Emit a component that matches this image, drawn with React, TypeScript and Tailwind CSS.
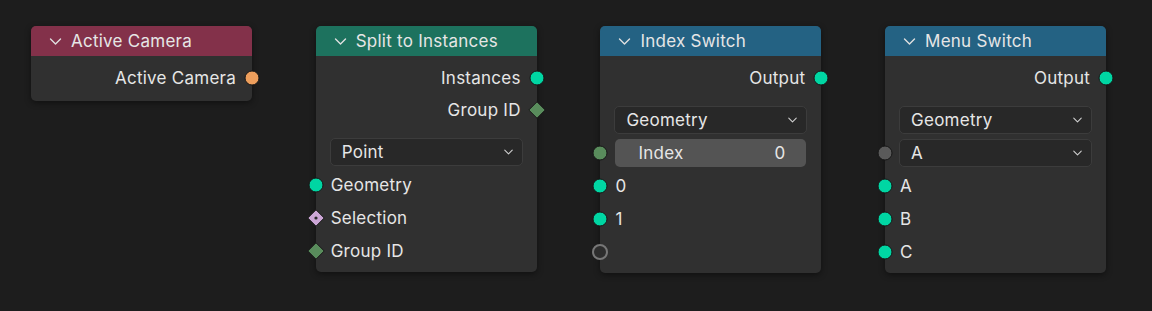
import type { ReactNode } from "react";

type SocketKind = "geometry" | "object" | "int" | "bool" | "intIn" | "virtual" | "menu";

// Socket glyph centred on the node edge
function Socket({ kind }: { kind: SocketKind }) {
  if (kind === "int" || kind === "bool") {
    const fill = kind === "int" ? "#598c5c" : "#cca6d6";
    return (
      <svg width="18" height="18" viewBox="0 0 18 18">
        <polygon points="9,0.8 17.2,9 9,17.2 0.8,9" fill={fill} stroke="#1a1a1a" strokeWidth="1" />
        {kind === "bool" && <circle cx="9" cy="9" r="1.6" fill="#2a2a2a" />}
      </svg>
    );
  }
  if (kind === "virtual") {
    return <span className="w-[16px] h-[16px] rounded-full border-2 border-[#777777] bg-[#2d2d2d]" />;
  }
  const fill =
    kind === "geometry"
      ? "bg-[#00d6a3]"
      : kind === "object"
        ? "bg-[#ed9e5c]"
        : kind === "intIn"
          ? "bg-[#598c5c]"
          : "bg-[#5a5a5a]";
  return <span className={`w-[15px] h-[15px] rounded-full ${fill} border border-[#161616]`} />;
}

function OutRow({ label, kind }: { label: string; kind: SocketKind }) {
  return (
    <div className="relative h-[32px] flex items-center justify-end pr-[16px]">
      <span className="relative top-[1px]">{label}</span>
      <span className="absolute right-0 top-1/2 translate-x-1/2 -translate-y-1/2 flex">
        <Socket kind={kind} />
      </span>
    </div>
  );
}

function InRow({ label, kind }: { label?: string; kind: SocketKind }) {
  return (
    <div className="relative h-[33px] flex items-center pl-[15px]">
      <span className="relative top-[1px]">{label}</span>
      <span className="absolute left-0 top-1/2 -translate-x-1/2 -translate-y-1/2 flex">
        <Socket kind={kind} />
      </span>
    </div>
  );
}

function Chevron({ className }: { className: string }) {
  return (
    <svg className={className} viewBox="0 0 12 7" fill="none" stroke="currentColor" strokeWidth="1.4" strokeLinecap="round" strokeLinejoin="round">
      <path d="M1 1l5 5 5-5" />
    </svg>
  );
}

function Dropdown({ label, socket }: { label: string; socket?: SocketKind }) {
  return (
    <div className="relative mx-[14px] h-[28px] rounded-[5px] bg-[#282828] border border-[#3c3c3c] flex items-center justify-between pl-[11px] pr-[9px]">
      <span className="relative top-[1px]">{label}</span>
      <Chevron className="w-[9px] h-[6px] text-[#d0d0d0]" />
      {socket && (
        <span className="absolute left-[-15px] top-1/2 -translate-x-1/2 -translate-y-1/2 flex">
          <Socket kind={socket} />
        </span>
      )}
    </div>
  );
}

function Node({ title, header, children, pb }: { title: string; header: string; children: ReactNode; pb: string }) {
  return (
    <div className="w-[221px] shrink-0 rounded-[5px] bg-[#303030] shadow-[0_2px_6px_rgba(0,0,0,0.45)]">
      <div className={`h-[30px] rounded-t-[5px] ${header} flex items-center pl-[18px] gap-[9px]`}>
        <Chevron className="w-[13px] h-[7px] text-[#e0e0e0]" />
        <span className="relative top-[1px]">{title}</span>
      </div>
      <div className={`pt-[6px] ${pb}`}>{children}</div>
    </div>
  );
}

export default function App() {
  return (
    <div
      className="w-[1152px] h-[311px] bg-[#1d1d1d] text-[#e6e6e6] text-[17px] tracking-[0.25px] flex items-start gap-[63.7px] pl-[31px] pt-[26px]"
      style={{ fontFamily: "Inter, 'Noto Sans', sans-serif" }}
    >
      <Node title="Active Camera" header="bg-[#83314a]" pb="pb-[7px]">
        <OutRow label="Active Camera" kind="object" />
      </Node>

      <Node title="Split to Instances" header="bg-[#1d725e]" pb="pb-[5px]">
        <OutRow label="Instances" kind="geometry" />
        <OutRow label="Group ID" kind="int" />
        <div className="mt-[12px] mb-[2px]">
          <Dropdown label="Point" />
        </div>
        <InRow label="Geometry" kind="geometry" />
        <InRow label="Selection" kind="bool" />
        <InRow label="Group ID" kind="int" />
      </Node>

      <Node title="Index Switch" header="bg-[#246283]" pb="pb-[5px]">
        <OutRow label="Output" kind="geometry" />
        <div className="mt-[12px]">
          <Dropdown label="Geometry" />
        </div>
        <div className="relative mt-[5px] mb-[2px] mx-[15px] h-[28px] rounded-[5px] bg-[#545454] flex items-center justify-between pl-[23px] pr-[21px]">
          <span className="relative top-[1px]">Index</span>
          <span className="relative top-[1px]">0</span>
          <span className="absolute left-[-15px] top-1/2 -translate-x-1/2 -translate-y-1/2 flex">
            <Socket kind="intIn" />
          </span>
        </div>
        <InRow label="0" kind="geometry" />
        <InRow label="1" kind="geometry" />
        <InRow kind="virtual" />
      </Node>

      <Node title="Menu Switch" header="bg-[#246283]" pb="pb-[5px]">
        <OutRow label="Output" kind="geometry" />
        <div className="mt-[12px]">
          <Dropdown label="Geometry" />
        </div>
        <div className="mt-[5px] mb-[2px]">
          <Dropdown label="A" socket="menu" />
        </div>
        <InRow label="A" kind="geometry" />
        <InRow label="B" kind="geometry" />
        <InRow label="C" kind="geometry" />
      </Node>
    </div>
  );
}
